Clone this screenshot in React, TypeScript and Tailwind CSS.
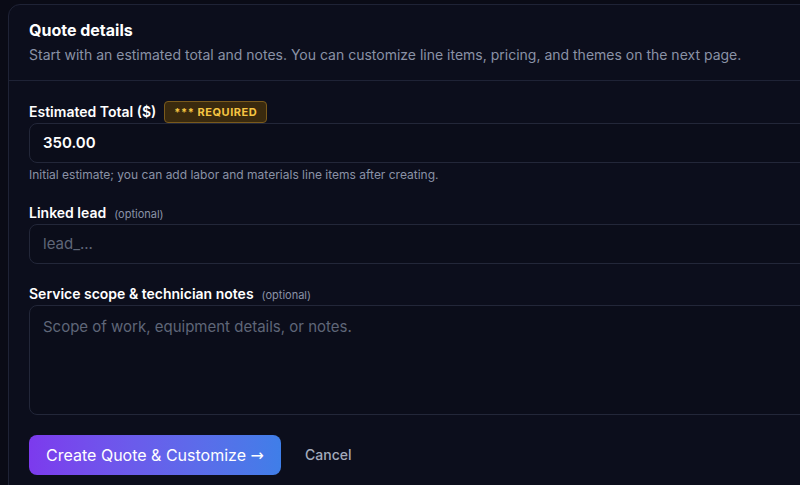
import React from 'react';

const App = () => {
  return (
    <div className="w-[800px] h-[485px] overflow-hidden bg-[#0a0b16] pl-2 pt-1 font-['Inter',sans-serif]">
      <div className="w-[860px] min-h-[520px] rounded-t-xl border border-[#1f2336] bg-[#0c0e1c]">
        {/* Header */}
        <div className="px-5 pt-[15px] pb-[15px] border-b border-[#1f2336]">
          <h2 className="text-base font-bold text-white leading-5">Quote details</h2>
          <p className="mt-[5px] text-sm text-[#8a92a6] leading-5">
            Start with an estimated total and notes. You can customize line items, pricing, and themes on the next page.
          </p>
        </div>

        {/* Form */}
        <div className="px-5 pt-5">
          <div className="flex items-center gap-2">
            <label className="text-sm font-semibold text-white">Estimated Total ($)</label>
            <span className="rounded border border-[#7a5a1c] bg-[#3a2a0e] px-[9px] py-[3px] text-[11px] font-bold tracking-wider text-[#f5c542] leading-[14px]">
              *** REQUIRED
            </span>
          </div>
          <div className="mt-0 h-10 rounded-lg border border-[#232739] bg-[#0b0d1a] px-[13px] flex items-center">
            <span className="text-[15px] font-semibold text-white">350.00</span>
          </div>
          <p className="mt-[4px] text-xs text-[#8a92a6]">
            Initial estimate; you can add labor and materials line items after creating.
          </p>

          <div className="mt-[20px] flex items-baseline gap-2">
            <label className="text-sm font-semibold text-white">Linked lead</label>
            <span className="text-[11px] text-[#8a92a6]">(optional)</span>
          </div>
          <div className="mt-px h-10 rounded-lg border border-[#232739] bg-[#0b0d1a] px-[13px] flex items-center">
            <span className="text-[15px] text-[#5f6678]">lead_...</span>
          </div>

          <div className="mt-[20px] flex items-baseline gap-2">
            <label className="text-sm font-semibold text-white">Service scope &amp; technician notes</label>
            <span className="text-[11px] text-[#8a92a6]">(optional)</span>
          </div>
          <div className="mt-px h-[110px] rounded-lg border border-[#232739] bg-[#0b0d1a] px-[13px] pt-[8px]">
            <span className="text-[15px] text-[#5f6678]">Scope of work, equipment details, or notes.</span>
          </div>

          <div className="mt-[20px] flex items-center gap-6">
            <button className="h-10 w-[252px] rounded-lg bg-gradient-to-r from-[#7c3aed] to-[#3f7ee8] text-base text-white">
              Create Quote &amp; Customize <span className="font-['DejaVu_Sans',sans-serif]">→</span>
            </button>
            <button className="text-sm font-medium text-[#a3abbd]">Cancel</button>
          </div>
        </div>
      </div>
    </div>
  );
};

export default App;
